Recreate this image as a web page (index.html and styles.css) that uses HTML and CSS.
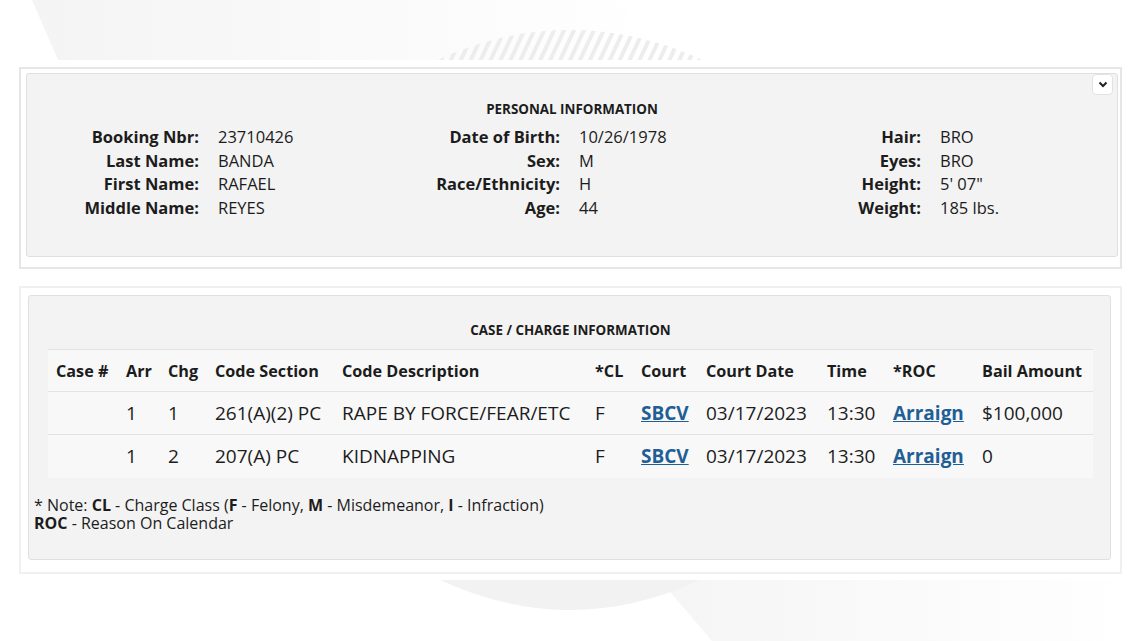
FILE: index.html
```html
<!DOCTYPE html>
<html lang="en">
     <head>
          <meta charset="UTF-8">
          <meta name="viewport" content="width=device-width, initial-scale=1.0">
          <title>Inmate Information</title>
          <link rel="stylesheet" href="styles.css">
     </head>
     <body>
          <svg class="backdrop" width="1140" height="641" viewBox="0 0 1140 641" aria-hidden="true">
               <defs>
                    <linearGradient id="fadeTop" x1="0" y1="0" x2="1" y2="0">
                         <stop offset="0" stop-color="#f4f4f4"/>
                         <stop offset="1" stop-color="#ffffff"/>
                    </linearGradient>
                    <linearGradient id="fadeBottom" x1="0" y1="0" x2="1" y2="0">
                         <stop offset="0" stop-color="#f5f5f5"/>
                         <stop offset="1" stop-color="#ffffff"/>
                    </linearGradient>
                    <pattern id="hatch" width="9" height="9" patternUnits="userSpaceOnUse" patternTransform="rotate(25)">
                         <rect width="4" height="9" fill="#ededed"/>
                    </pattern>
                    <clipPath id="topClip"><rect x="0" y="0" width="1140" height="60"/></clipPath>
               </defs>
               <polygon points="32,0 620,0 660,60 58,60" fill="url(#fadeTop)"/>
               <circle cx="570" cy="336" r="306" fill="url(#hatch)" clip-path="url(#topClip)"/>
               <polygon points="660,580 1140,580 1140,641 712,641" fill="url(#fadeBottom)"/>
               <path d="M440 580 Q570 640 700 580 Z" fill="#f2f2f2"/>
          </svg>

          <div class="card card-personal">
               <div class="panel">
                    <button class="toggle" type="button" aria-label="Collapse">
                         <svg width="10" height="7" viewBox="0 0 10 7"><path d="M1.5 1.5 L5 5 L8.5 1.5" fill="none" stroke="#222" stroke-width="2"/></svg>
                    </button>
                    <h2 class="panel-title">PERSONAL INFORMATION</h2>
                    <div class="info-grid">
                         <div class="label">Booking Nbr:</div><div class="value">23710426</div>
                         <div class="label">Date of Birth:</div><div class="value">10/26/1978</div>
                         <div class="label">Hair:</div><div class="value">BRO</div>

                         <div class="label">Last Name:</div><div class="value">BANDA</div>
                         <div class="label">Sex:</div><div class="value">M</div>
                         <div class="label">Eyes:</div><div class="value">BRO</div>

                         <div class="label">First Name:</div><div class="value">RAFAEL</div>
                         <div class="label">Race/Ethnicity:</div><div class="value">H</div>
                         <div class="label">Height:</div><div class="value">5' 07"</div>

                         <div class="label">Middle Name:</div><div class="value">REYES</div>
                         <div class="label">Age:</div><div class="value">44</div>
                         <div class="label">Weight:</div><div class="value">185 lbs.</div>
                    </div>
               </div>
          </div>

          <div class="card card-charges">
               <div class="panel">
                    <h2 class="panel-title">CASE / CHARGE INFORMATION</h2>
                    <table class="charges">
                         <thead>
                              <tr>
                                   <th class="c-case">Case #</th>
                                   <th class="c-arr">Arr</th>
                                   <th class="c-chg">Chg</th>
                                   <th class="c-section">Code Section</th>
                                   <th class="c-desc">Code Description</th>
                                   <th class="c-cl">*CL</th>
                                   <th class="c-court">Court</th>
                                   <th class="c-date">Court Date</th>
                                   <th class="c-time">Time</th>
                                   <th class="c-roc">*ROC</th>
                                   <th class="c-bail">Bail Amount</th>
                              </tr>
                         </thead>
                         <tbody>
                              <tr>
                                   <td></td>
                                   <td>1</td>
                                   <td>1</td>
                                   <td>261(A)(2) PC</td>
                                   <td>RAPE BY FORCE/FEAR/ETC</td>
                                   <td>F</td>
                                   <td><a href="#">SBCV</a></td>
                                   <td>03/17/2023</td>
                                   <td>13:30</td>
                                   <td><a href="#">Arraign</a></td>
                                   <td>$100,000</td>
                              </tr>
                              <tr>
                                   <td></td>
                                   <td>1</td>
                                   <td>2</td>
                                   <td>207(A) PC</td>
                                   <td>KIDNAPPING</td>
                                   <td>F</td>
                                   <td><a href="#">SBCV</a></td>
                                   <td>03/17/2023</td>
                                   <td>13:30</td>
                                   <td><a href="#">Arraign</a></td>
                                   <td>0</td>
                              </tr>
                         </tbody>
                    </table>
                    <p class="note">
                         * Note: <b>CL</b> - Charge Class (<b>F</b> - Felony, <b>M</b> - Misdemeanor, <b>I</b> - Infraction)<br>
                         <b>ROC</b> - Reason On Calendar
                    </p>
               </div>
          </div>
     </body>
</html>
```

FILE: styles.css
```css
body {
     font-family: "Open Sans", "Liberation Sans", sans-serif;
     color: #1c1c1c;
     background-color: #fff;
     margin: 0;
     padding: 67px 0 0 0;
     position: relative;
     height: 641px;
     box-sizing: border-box;
     overflow: hidden;
}
.backdrop {
     position: absolute;
     top: 0;
     left: 0;
     z-index: -1;
}
.card {
     width: 1103px;
     margin-left: 19px;
     box-sizing: border-box;
     background-color: #fff;
}
.card-personal {
     border: 2px solid #e6e6e6;
     padding: 4px 2px 10px 5px;
}
.card-charges {
     margin-top: 17px;
     border: 2px solid #f0f0f0;
     padding: 7px 9px 12px 7px;
}
.panel {
     position: relative;
     background-color: #f3f3f3;
     border: 1px solid #e0e0e0;
     border-radius: 3px;
}
.card-personal .panel {
     height: 184px;
     box-sizing: border-box;
     padding-top: 26px;
}
.card-charges .panel {
     height: 265px;
     box-sizing: border-box;
     padding: 25px 17px 0 19px;
}
.toggle {
     position: absolute;
     top: 0;
     right: 4px;
     width: 21px;
     height: 21px;
     padding: 0;
     background-color: #fff;
     border: 1px solid #e2e2e2;
     border-radius: 4px;
     display: flex;
     align-items: center;
     justify-content: center;
}
.panel-title {
     margin: 0;
     font-size: 13.4px;
     line-height: 18px;
     font-weight: 700;
     text-align: center;
}
.info-grid {
     display: grid;
     grid-template-columns: 172px 179px 182px 181px 180px 1fr;
     margin-top: 7px;
     font-size: 16.5px;
     line-height: 23.5px;
}
.label {
     font-weight: 700;
     text-align: right;
}
.value {
     padding-left: 19px;
}
.charges {
     width: 100%;
     border-collapse: collapse;
     table-layout: fixed;
     margin-top: 10px;
}
.charges th,
.charges td {
     box-sizing: border-box;
     padding: 0 0 0 8px;
     text-align: left;
     white-space: nowrap;
     border-top: 1px solid #e3e3e3;
     background-color: #f8f8f8;
}
.charges th {
     height: 42px;
     font-size: 16.2px;
     font-weight: 700;
}
.charges td {
     height: 43px;
     font-size: 19px;
}
.charges a {
     color: #1f5f96;
     font-weight: 700;
}
.c-case { width: 70px; }
.c-arr { width: 42px; }
.c-chg { width: 47px; }
.c-section { width: 127px; }
.c-desc { width: 253px; }
.c-cl { width: 46px; }
.c-court { width: 65px; }
.c-date { width: 121px; }
.c-time { width: 66px; }
.c-roc { width: 89px; }
.note {
     margin: 18px 0 0 -14px;
     font-size: 16px;
     line-height: 18.5px;
}
```
